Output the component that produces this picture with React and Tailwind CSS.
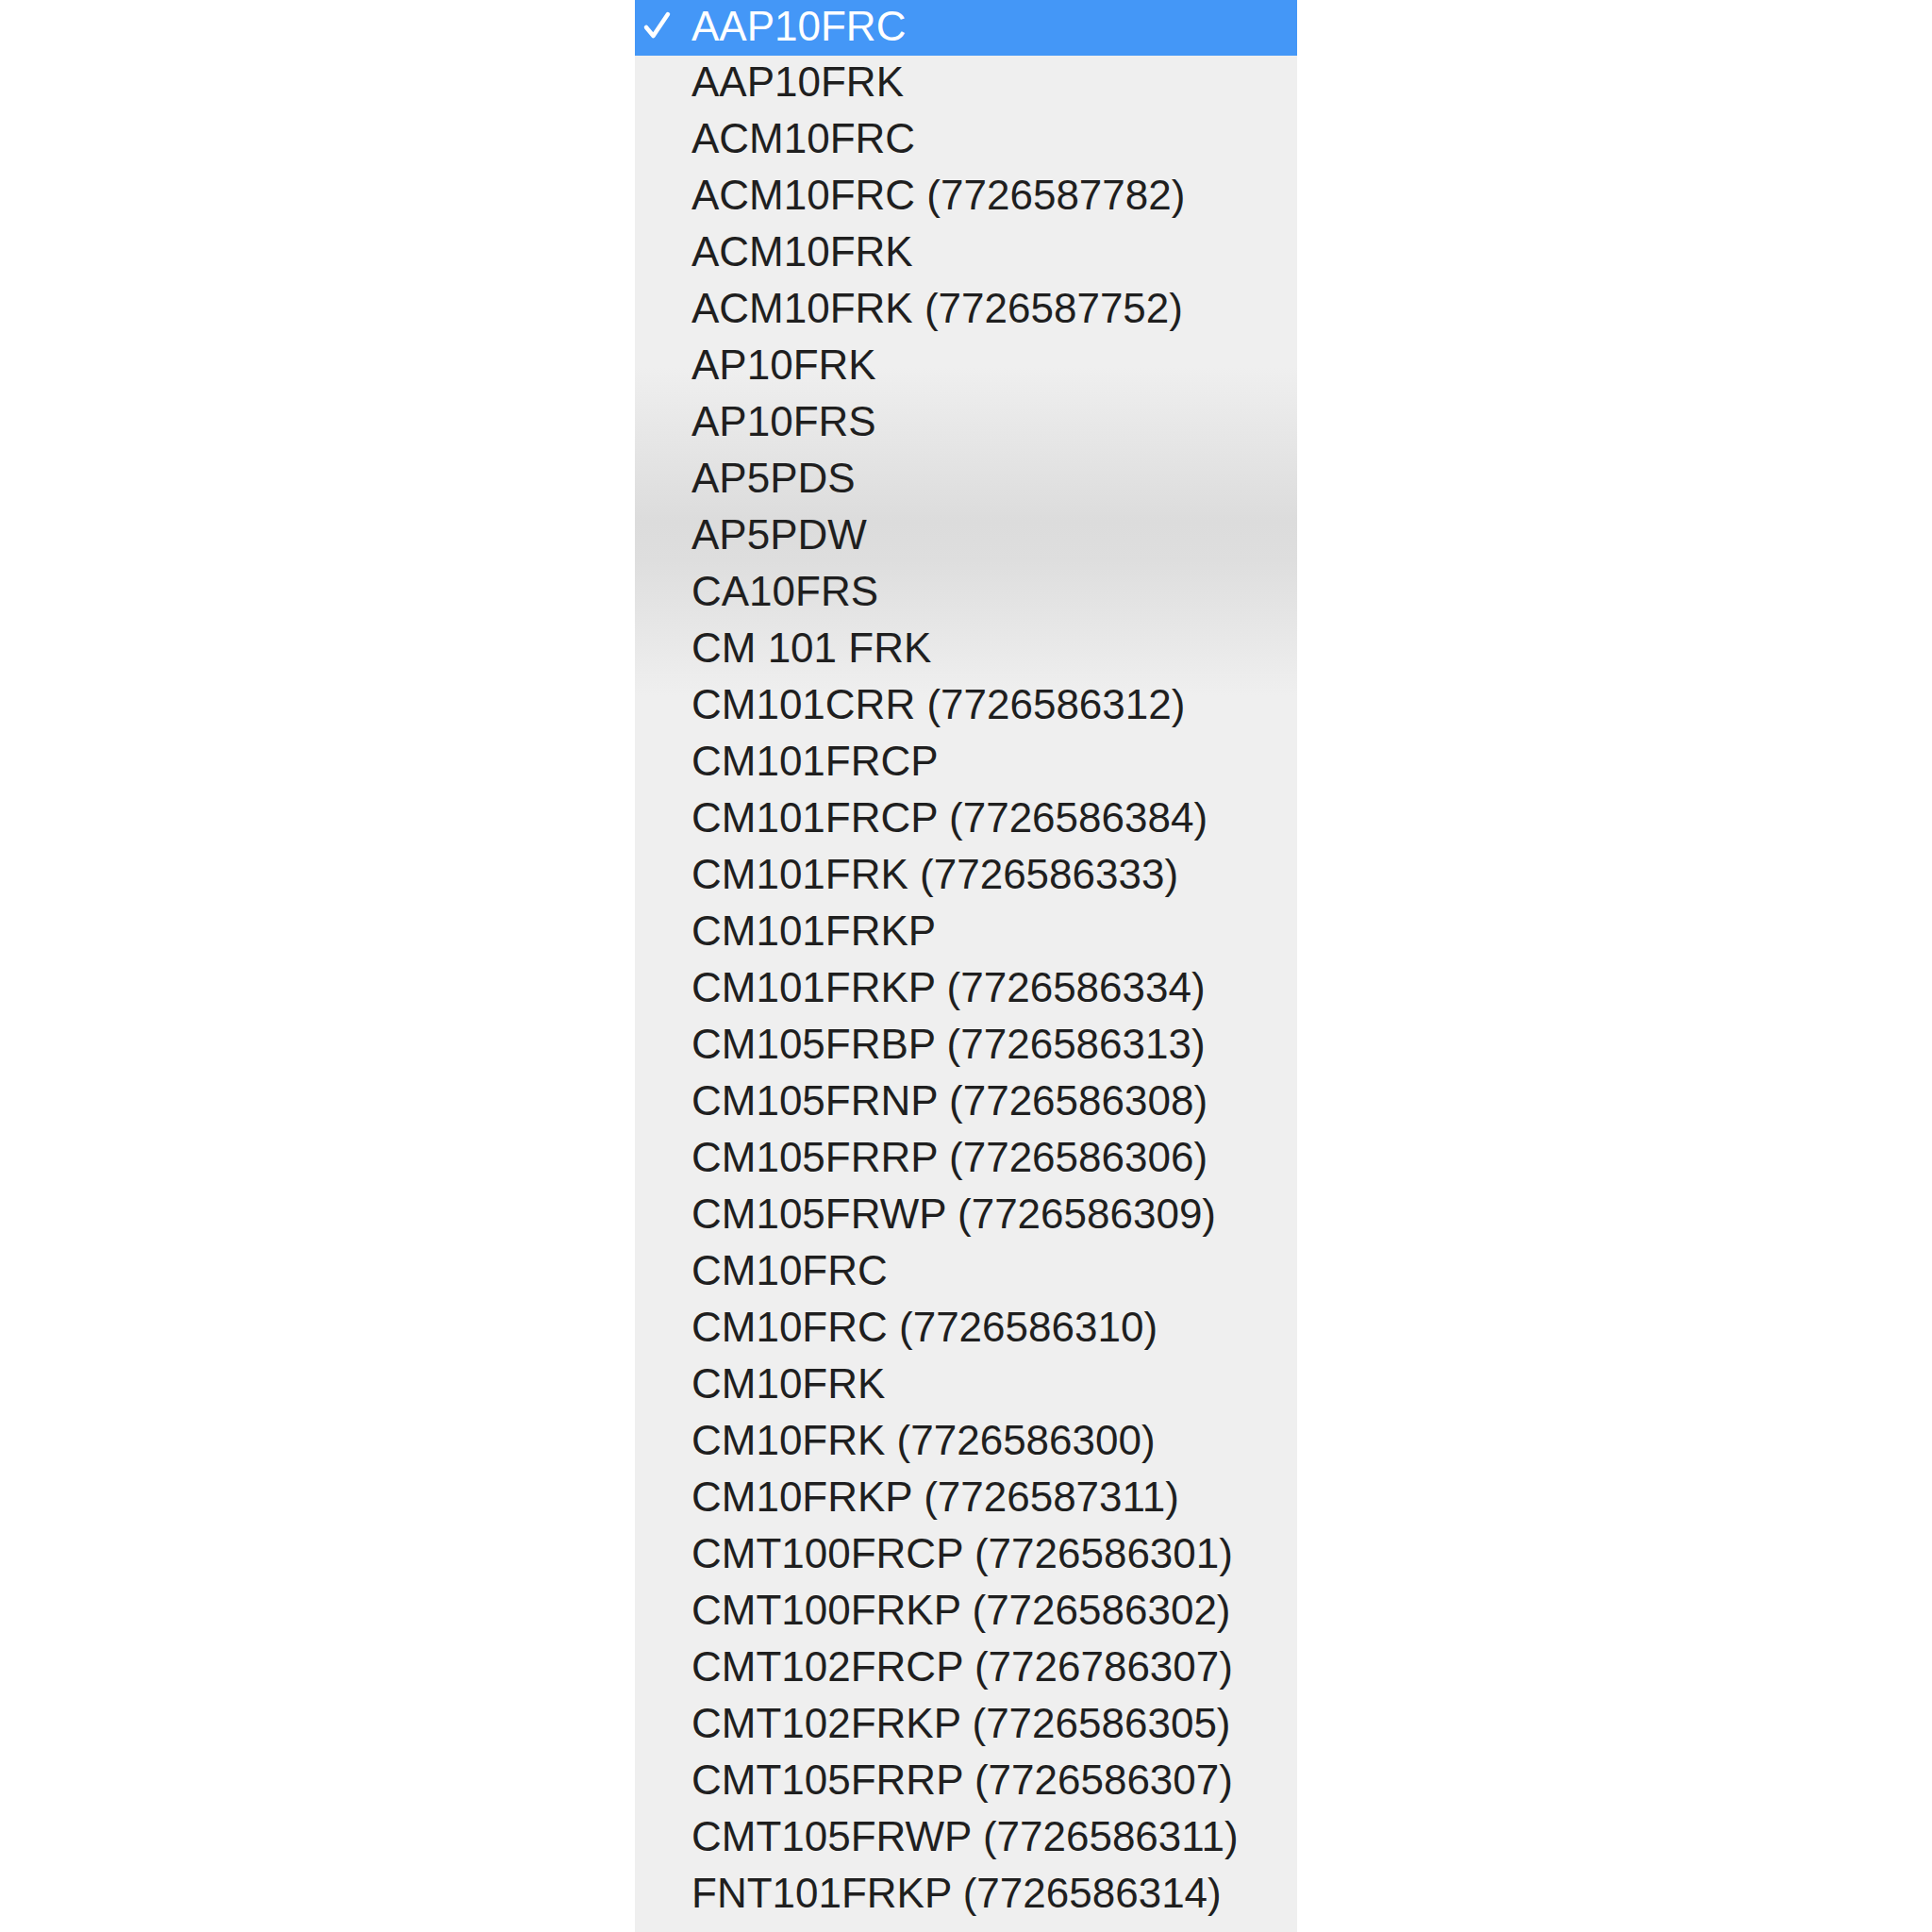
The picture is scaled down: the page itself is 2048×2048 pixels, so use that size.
import React from "react";

const items = [
  "AAP10FRC",
  "AAP10FRK",
  "ACM10FRC",
  "ACM10FRC (7726587782)",
  "ACM10FRK",
  "ACM10FRK (7726587752)",
  "AP10FRK",
  "AP10FRS",
  "AP5PDS",
  "AP5PDW",
  "CA10FRS",
  "CM 101 FRK",
  "CM101CRR (7726586312)",
  "CM101FRCP",
  "CM101FRCP (7726586384)",
  "CM101FRK (7726586333)",
  "CM101FRKP",
  "CM101FRKP (7726586334)",
  "CM105FRBP (7726586313)",
  "CM105FRNP (7726586308)",
  "CM105FRRP (7726586306)",
  "CM105FRWP (7726586309)",
  "CM10FRC",
  "CM10FRC (7726586310)",
  "CM10FRK",
  "CM10FRK (7726586300)",
  "CM10FRKP (7726587311)",
  "CMT100FRCP (7726586301)",
  "CMT100FRKP (7726586302)",
  "CMT102FRCP (7726786307)",
  "CMT102FRKP (7726586305)",
  "CMT105FRRP (7726586307)",
  "CMT105FRWP (7726586311)",
  "FNT101FRKP (7726586314)",
];

export default function App() {
  return (
    <div className="w-[2048px] h-[2048px] bg-white flex overflow-hidden font-['Liberation_Sans',Arial,sans-serif]">
      <div className="ml-[673px] w-[702px] h-full bg-[linear-gradient(to_bottom,#efefef_0%,#efefef_19%,#dcdcdc_27%,#dedede_29%,#efefef_36%,#efefef_100%)] flex flex-col">
        {items.map((name, i) => {
          const selected = i === 0;
          return (
            <div
              key={name}
              className={
                selected
                  ? "h-[59px] shrink-0 flex items-center bg-[#4497f7] text-white"
                  : "h-[60px] shrink-0 flex items-center text-[#1f1f1f]"
              }
            >
              <div className="w-[60px] shrink-0 flex pl-[8px]">
                {selected && (
                  <svg width="32" height="32" viewBox="0 0 32 32" className="-mt-[6px]">
                    <path
                      d="M4 18 L11.5 27 L27 4"
                      fill="none"
                      stroke="white"
                      strokeWidth="4.5"
                      strokeLinecap="round"
                      strokeLinejoin="round"
                    />
                  </svg>
                )}
              </div>
              <span className="text-[44px] leading-none -mt-[4px] whitespace-nowrap">{name}</span>
            </div>
          );
        })}
      </div>
    </div>
  );
}
